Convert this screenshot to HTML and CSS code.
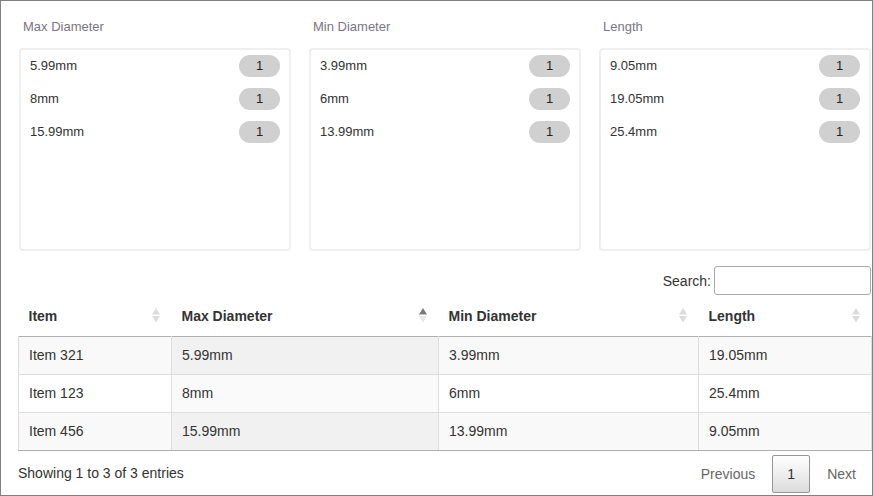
FILE: index.html
```html
<!DOCTYPE html>
<html>
<head>
<meta charset="utf-8">
<link rel="stylesheet" href="styles.css">
</head>
<body>
<div class="frame">
  <div class="facets">
    <div class="facet">
      <div class="facet-title">Max Diameter</div>
      <div class="facet-box">
        <div class="facet-row"><span>5.99mm</span><span class="badge">1</span></div>
        <div class="facet-row"><span>8mm</span><span class="badge">1</span></div>
        <div class="facet-row"><span>15.99mm</span><span class="badge">1</span></div>
      </div>
    </div>
    <div class="facet">
      <div class="facet-title">Min Diameter</div>
      <div class="facet-box">
        <div class="facet-row"><span>3.99mm</span><span class="badge">1</span></div>
        <div class="facet-row"><span>6mm</span><span class="badge">1</span></div>
        <div class="facet-row"><span>13.99mm</span><span class="badge">1</span></div>
      </div>
    </div>
    <div class="facet">
      <div class="facet-title">Length</div>
      <div class="facet-box">
        <div class="facet-row"><span>9.05mm</span><span class="badge">1</span></div>
        <div class="facet-row"><span>19.05mm</span><span class="badge">1</span></div>
        <div class="facet-row"><span>25.4mm</span><span class="badge">1</span></div>
      </div>
    </div>
  </div>

  <div class="search-row">
    <label class="search-label">Search:</label>
    <input class="search-input" type="text">
  </div>

  <table class="data">
    <colgroup>
      <col class="c1"><col class="c2"><col class="c3"><col class="c4">
    </colgroup>
    <thead>
      <tr>
        <th><div class="th-in"><span>Item</span><svg class="sort" width="8" height="15" viewBox="0 0 8 15"><path d="M4 0 L8 6.5 L0 6.5 Z" fill="#dcdcdc"/><path d="M0 8 L8 8 L4 14.5 Z" fill="#dcdcdc"/></svg></div></th>
        <th><div class="th-in"><span>Max Diameter</span><svg class="sort" width="8" height="15" viewBox="0 0 8 15"><path d="M4 0 L8 6.5 L0 6.5 Z" fill="#7a7a7a"/><path d="M0 8 L8 8 L4 14.5 Z" fill="#e6e6e6"/></svg></div></th>
        <th><div class="th-in"><span>Min Diameter</span><svg class="sort" width="8" height="15" viewBox="0 0 8 15"><path d="M4 0 L8 6.5 L0 6.5 Z" fill="#dcdcdc"/><path d="M0 8 L8 8 L4 14.5 Z" fill="#dcdcdc"/></svg></div></th>
        <th><div class="th-in"><span>Length</span><svg class="sort" width="8" height="15" viewBox="0 0 8 15"><path d="M4 0 L8 6.5 L0 6.5 Z" fill="#dcdcdc"/><path d="M0 8 L8 8 L4 14.5 Z" fill="#dcdcdc"/></svg></div></th>
      </tr>
    </thead>
    <tbody>
      <tr class="odd"><td>Item 321</td><td class="sorted">5.99mm</td><td>3.99mm</td><td>19.05mm</td></tr>
      <tr class="even"><td>Item 123</td><td class="sorted">8mm</td><td>6mm</td><td>25.4mm</td></tr>
      <tr class="odd"><td>Item 456</td><td class="sorted">15.99mm</td><td>13.99mm</td><td>9.05mm</td></tr>
    </tbody>
  </table>

  <div class="footer">
    <div class="info">Showing 1 to 3 of 3 entries</div>
    <div class="paginate">
      <span class="pg disabled">Previous</span>
      <span class="pg current">1</span>
      <span class="pg disabled">Next</span>
    </div>
  </div>
</div>
</body>
</html>
```

FILE: styles.css
```css
html, body {
  margin: 0;
  padding: 0;
  background: #fff;
}

body {
  font-family: "Liberation Sans", Arial, sans-serif;
  font-size: 14px;
  color: #333;
}

.frame {
  box-sizing: border-box;
  width: 873px;
  height: 496px;
  border: 1px solid #808080;
  padding: 18px 1px 0 17px;
  overflow: hidden;
}

.facets {
  display: grid;
  grid-template-columns: 272px 272px 272px;
  column-gap: 18px;
  padding-left: 1px;
}

.facet-title {
  font-size: 13px;
  line-height: 15px;
  color: #7b7585;
  padding-left: 4px;
  margin-bottom: 14px;
}

.facet-box {
  box-sizing: border-box;
  height: 203px;
  border: 2px solid #efefef;
  border-radius: 4px;
  padding: 5px 9px 0 9px;
}

.facet-row {
  display: flex;
  justify-content: space-between;
  align-items: center;
  height: 22px;
  margin-bottom: 11px;
  font-size: 13px;
  color: #333;
}

.facet-row span:first-child {
  position: relative;
  top: -1px;
}

.badge {
  display: inline-block;
  width: 41px;
  height: 22px;
  line-height: 22px;
  border-radius: 11px;
  background: #d0d0d0;
  text-align: center;
  font-size: 13px;
  color: #222;
}

.search-row {
  display: flex;
  justify-content: flex-end;
  align-items: center;
  margin-top: 15px;
  height: 29px;
  margin-bottom: 1px;
}

.search-label {
  font-size: 14px;
  color: #333;
  margin-right: 3px;
}

.search-input {
  box-sizing: border-box;
  width: 157px;
  height: 29px;
  border: 1px solid #aaa;
  border-radius: 3px;
  padding: 4px;
  margin: 0;
  background: #fff;
  font-family: inherit;
}

.data {
  width: 853px;
  border-collapse: collapse;
  border-spacing: 0;
  table-layout: fixed;
  margin-top: 0;
}

.c1 { width: 153px; }
.c2 { width: 267px; }
.c3 { width: 260px; }
.c4 { width: 173px; }

.data th {
  box-sizing: border-box;
  height: 40px;
  padding: 0 12px 0 10px;
  text-align: left;
  font-weight: bold;
  font-size: 14px;
  color: #333;
}

.th-in {
  display: flex;
  justify-content: space-between;
  align-items: center;
}

.sort {
  display: block;
}

.data td {
  padding: 8px 10px;
  line-height: 21px;
  height: 21px;
  font-size: 14px;
  color: #333;
  border-top: 1px solid #ddd;
  border-right: 1px solid #ddd;
}

.data td:first-child {
  border-left: 1px solid #ddd;
}

.data tbody tr:first-child td {
  border-top: 1px solid #b0b0b0;
}

.data tbody tr:last-child td {
  border-bottom: 1px solid #b0b0b0;
}

.data tr.odd td { background: #f9f9f9; }
.data tr.odd td.sorted { background: #f1f1f1; }
.data tr.even td { background: #fff; }
.data tr.even td.sorted { background: #fafafa; }

.footer {
  display: flex;
  justify-content: space-between;
  align-items: flex-start;
  padding-top: 4px;
}

.info {
  padding-top: 10px;
  font-size: 14px;
  color: #333;
}

.paginate {
  display: flex;
  align-items: center;
  padding-right: 0;
}

.pg {
  box-sizing: border-box;
  display: inline-block;
  padding: 8px 14px;
  line-height: 20px;
  margin-left: 2px;
  border: 1px solid transparent;
  border-radius: 2px;
  font-size: 14px;
}

.pg.disabled {
  color: #666;
}

.pg.current {
  color: #333;
  border: 1px solid #979797;
  background: linear-gradient(to bottom, #fff 0%, #dcdcdc 100%);
  padding: 8px 13px;
  width: 38px;
  text-align: center;
}
```
